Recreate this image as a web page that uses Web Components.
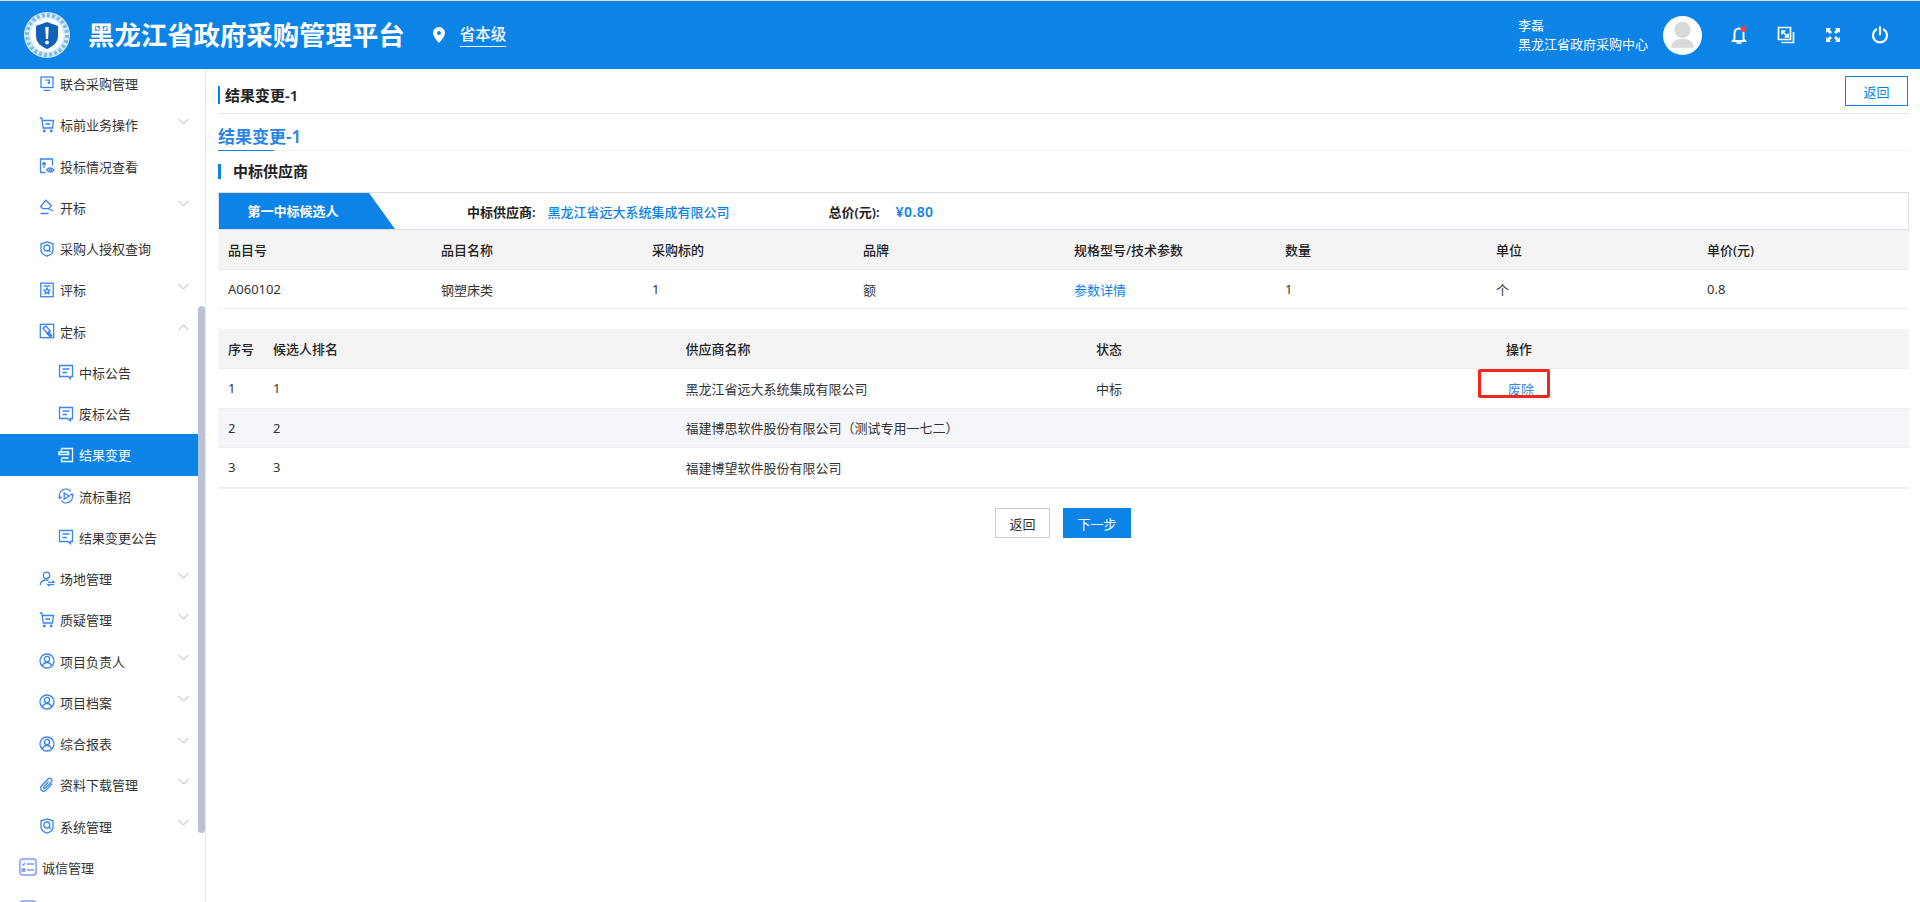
<!DOCTYPE html>
<html lang="zh-CN">
<head>
<meta charset="utf-8">
<title>结果变更</title>
<style>
  html, body { margin: 0; height: 902px; overflow: hidden; background: #fff; }
  body { font-family: "Noto Sans", "Noto Sans CJK SC", sans-serif; font-size: 13px; color: #333; }
</style>
</head>
<body>
<app-shell>
  <app-header slot="header" user="李磊" org="黑龙江省政府采购中心"></app-header>
  <side-nav slot="nav">
    <nav-item icon="join">联合采购管理</nav-item>
    <nav-item icon="cart" arrow="down">标前业务操作</nav-item>
    <nav-item icon="upeye">投标情况查看</nav-item>
    <nav-item icon="open" arrow="down">开标</nav-item>
    <nav-item icon="shield">采购人授权查询</nav-item>
    <nav-item icon="star" arrow="down">评标</nav-item>
    <nav-item icon="hammer" arrow="up">定标</nav-item>
    <nav-item icon="msg" level="2">中标公告</nav-item>
    <nav-item icon="msg" level="2">废标公告</nav-item>
    <nav-item icon="change" level="2" active>结果变更</nav-item>
    <nav-item icon="replay" level="2">流标重招</nav-item>
    <nav-item icon="msg" level="2">结果变更公告</nav-item>
    <nav-item icon="swap" arrow="down">场地管理</nav-item>
    <nav-item icon="cart" arrow="down">质疑管理</nav-item>
    <nav-item icon="user" arrow="down">项目负责人</nav-item>
    <nav-item icon="user" arrow="down">项目档案</nav-item>
    <nav-item icon="user" arrow="down">综合报表</nav-item>
    <nav-item icon="clip" arrow="down">资料下载管理</nav-item>
    <nav-item icon="shield" arrow="down">系统管理</nav-item>
    <nav-item icon="list" level="0">诚信管理</nav-item>
    <nav-item icon="list" level="0"></nav-item>
  </side-nav>

  <page-head>结果变更-1</page-head>
  <tab-title>结果变更-1</tab-title>
  <section-title>中标供应商</section-title>
  <winner-bar tab="第一中标候选人" supplier="黑龙江省远大系统集成有限公司" price="¥0.80"></winner-bar>

  <data-table cols="213px 211px 211px 211px 211px 211px 211px 212px">
    <table-row head><span>品目号</span><span>品目名称</span><span>采购标的</span><span>品牌</span><span>规格型号/技术参数</span><span>数量</span><span>单位</span><span>单价(元)</span></table-row>
    <table-row short><span>A060102</span><span>钢塑床类</span><span>1</span><span>额</span><span class="link">参数详情</span><span>1</span><span>个</span><span>0.8</span></table-row>
  </data-table>

  <data-table class="second" cols="45px 412.5px 410.5px 410px 413px">
    <table-row head><span>序号</span><span>候选人排名</span><span>供应商名称</span><span>状态</span><span>操作</span></table-row>
    <table-row><span>1</span><span>1</span><span>黑龙江省远大系统集成有限公司</span><span>中标</span><span><mark-link>废除</mark-link></span></table-row>
    <table-row stripe><span>2</span><span>2</span><span>福建博思软件股份有限公司（测试专用一七二）</span><span></span><span></span></table-row>
    <table-row><span>3</span><span>3</span><span>福建博望软件股份有限公司</span><span></span><span></span></table-row>
  </data-table>

  <form-actions>
    <app-button>返回</app-button>
    <app-button primary>下一步</app-button>
  </form-actions>
</app-shell>

<script>
// nav icons, all on a 16 box
const ICONS = {
  join: '<rect x="2" y="1" width="12" height="10.500"/><path d="M6.500 4.200h3.800v3.600M8.600 6.300l1.700 1.600M4.500 14.300h7"/>',
  cart: '<path d="M.8 1h2l1.400 10h9.300l1-7.500H3.300"/><path d="M6.500 7h4.500" stroke-width="1.600"/><circle cx="5.300" cy="14" r=".8"/><circle cx="12.200" cy="14" r=".8"/>',
  upeye: '<path d="M6.500 14.500H1.500V1h12v6.500"/><path d="M5 10V4.500M3 6.500l2-2 2 2"/><path d="M7.600 12c1.800-2.800 5.200-2.800 7.400 0-2.200 2.800-5.600 2.800-7.400 0z"/><circle cx="11.300" cy="12" r="1.200"/>',
  open: '<path d="m6.800 1.200 5.600 5.600-2.800 2.800-6 .1-2-2.200z"/><path d="M9.500 9.500l4.800 2.500"/><path d="M1.500 14.500h8" stroke-width="1.500"/>',
  shield: '<path d="M8 .9 14 2.800v6.400c0 2.900-3 4.800-6 6-3-1.200-6-3.100-6-6V2.800z"/><circle cx="7.800" cy="7" r="3"/><path d="m10 9.300 1.600 1.500"/>',
  star: '<rect x="1.800" y="1.200" width="12.400" height="13.500"/><path d="M4.500 4h7"/><path d="m8 6 .9 2 2.100.2-1.600 1.400.5 2.100L8 10.600l-1.900 1.100.5-2.100L5 8.200 7.100 8z"/>',
  hammer: '<rect x="1.300" y="1.300" width="13.400" height="13.400"/><path d="M4 5.300 6.800 3l4.600 5-2.900 2.500z" /><path d="m9.500 9 3.200 3.600-1.500 1.200L8 10.500z" fill="currentColor"/>',
  msg: '<path d="M1.500 1.500h13v11h-2v2.300l-2.700-2.300H1.500z"/><path d="M4.500 5h7M4.500 8.500h4.500" stroke-width="1.400"/>',
  change: '<path d="M3.500 4.500V1.500h11v13h-11v-3"/><path d="M1 5h9.500v2.500H1zM3.500 11h7" stroke-width="1.500"/>',
  replay: '<path d="M2 10A6.400 6.400 0 0 1 12.800 3.400"/><path d="M14 6A6.400 6.400 0 0 1 3.200 12.600"/><path d="m6.200 5 5 3-5 3z"/><path d="M.6 8.700 2 10.300l1.700-1.400M12.300 7.300 14 5.800l1.400 1.600"/>',
  swap: '<circle cx="7.500" cy="4.300" r="3.200"/><path d="M1.300 14.300c0-3.300 2.400-5.300 6-5.300.8 0 1.500.1 2.200.3"/><path d="M9 11.400h6.200l-1.600-1.600M15.200 13.600H9l1.600 1.600"/>',
  user: '<circle cx="8" cy="8" r="7"/><circle cx="8" cy="6" r="2.600"/><path d="M3.500 13c.6-2.200 2.400-3.500 4.500-3.500s3.900 1.300 4.500 3.500"/>',
  clip: '<path d="m13.300 6.500-6 6.400c-1.400 1.500-3.500 1.600-4.800.4s-1.100-3.300.3-4.800l6.200-6.500c1-1 2.400-1.100 3.300-.2s.8 2.300-.2 3.300l-5.700 6c-.4.500-1.100.5-1.500.1s-.4-1 .1-1.500L9.500 4.500"/>',
  list: '<rect x=".8" y=".8" width="14.400" height="14.400" rx="2.500"/><path d="M7 5.300h6.500M7 10.700h6.500M3 5.300l1 1 1.300-2"/><rect x="3" y="9.700" width="2" height="2"/>'
};

function svgIcon(name, color) {
  return `<svg viewBox="0 0 16 16" fill="none" stroke="${color}" color="${color}" stroke-width="1.300">${ICONS[name] || ''}</svg>`;
}

class AppShell extends HTMLElement {
  constructor() {
    super();
    this.attachShadow({ mode: 'open' });
    this.shadowRoot.innerHTML = `
      <style>
        :host { display: grid; grid-template-rows: 69px 833px; grid-template-columns: 206px 1fr; height: 902px; }
        ::slotted([slot=header]) { grid-column: 1 / 3; }
        main { padding: 7px 11px 0 12px; min-width: 0; }
      </style>
      <slot name="header"></slot>
      <slot name="nav"></slot>
      <main><slot></slot></main>`;
  }
}

class AppHeader extends HTMLElement {
  constructor() {
    super();
    this.attachShadow({ mode: 'open' });
    this.shadowRoot.innerHTML = `
      <style>
        :host { display: flex; align-items: center; box-sizing: border-box; height: 69px; border-top: 1px solid #d9dde2;
          background: #0c83e7; color: #fff; padding-left: 23px; padding-right: 29px; }
        .logo { width: 48px; height: 52px; flex: none; }
        h1 { margin: 0 0 0 17px; font-size: 26.400px; line-height: 34px; font-weight: 700; white-space: nowrap; }
        .pin { width: 14px; height: 16px; margin-left: 27px; flex: none; }
        .level { margin-left: 14px; font-size: 15.500px; line-height: 22px; font-weight: 500; padding-bottom: 1px; border-bottom: 1px solid #fff; }
        .who { margin-left: auto; font-size: 13px; line-height: 19px; }
        .avatar { width: 39px; height: 39px; margin-left: 15px; border-radius: 50%; background: #fff; overflow: hidden; flex: none; }
        .tools { display: flex; margin-left: 26px; gap: 25px; }
        .tools svg { width: 22px; height: 22px; display: block; }
      </style>
      <svg class="logo" viewBox="0 0 48 52">
        <circle cx="24" cy="26" r="23" fill="#d6ecfb"/>
        <circle cx="24" cy="26" r="20" fill="none" stroke="#7fbbe9" stroke-width="4" stroke-dasharray="3 2.200"/>
        <circle cx="24" cy="26" r="16.500" fill="#fff"/>
        <path d="M24 13l11 4v10c0 7-6 11-11 13-5-2-11-6-11-13V17z" fill="#0d62b8"/>
        <path d="M22.300 18h3.400l-.6 12h-2.200z" fill="#fff"/><circle cx="24" cy="33.500" r="1.900" fill="#fff"/>
      </svg>
      <h1>黑龙江省政府采购管理平台</h1>
      <svg class="pin" viewBox="0 0 14 16"><path fill-rule="evenodd" fill="#fff" d="M7 0a6 6 0 0 1 6 6c0 4-6 10-6 10S1 10 1 6a6 6 0 0 1 6-6zm0 4a2 2 0 1 0 0 4 2 2 0 0 0 0-4z"/></svg>
      <span class="level">省本级</span>
      <div class="who"><div>${this.getAttribute('user')}</div><div>${this.getAttribute('org')}</div></div>
      <svg class="avatar" viewBox="0 0 38 38"><circle cx="19" cy="13.500" r="8" fill="#d9d9d9"/><path d="M8 31c0-6 4-8.500 11-8.500S30 25 30 31z" fill="#d9d9d9"/></svg>
      <div class="tools">
        <svg viewBox="0 0 22 22"><path d="M11 4.500a4.500 4.500 0 0 0-4.500 4.500v6L5 17h12l-1.500-2V9A4.500 4.500 0 0 0 11 4.500z" fill="none" stroke="#fff" stroke-width="2"/><path d="M8.500 19h5" stroke="#fff" stroke-width="1.600"/><circle cx="15.500" cy="5" r="3" fill="#f2403a"/></svg>
        <svg viewBox="0 0 22 22" fill="none" stroke="#fff" stroke-width="1.700"><path d="M15.500 15.500V3.500h-12v12z"/><path d="M7 7l6 6M7 10.500V7h3.500M13 9.500V13H9.500"/><path d="M6.500 18.500h12V8"/></svg>
        <svg viewBox="0 0 22 22" fill="#fff"><path d="M4 4h5L7.500 5.500 10 8l-2 2-2.500-2.500L4 9zM18 4v5l-1.500-1.500L14 10l-2-2 2.500-2.500L13 4zM4 18v-5l1.500 1.500L8 12l2 2-2.500 2.500L9 18zM18 18h-5l1.500-1.500L12 14l2-2 2.500 2.500L18 13z"/></svg>
        <svg viewBox="0 0 22 22" fill="none" stroke="#fff" stroke-width="2.200" stroke-linecap="round"><path d="M14.800 5.500a7 7 0 1 1-7.600 0"/><path d="M11 3v7.500"/></svg>
      </div>`;
  }
}

class SideNav extends HTMLElement {
  constructor() {
    super();
    this.attachShadow({ mode: 'open' });
    this.shadowRoot.innerHTML = `
      <style>
        :host { display: flex; width: 206px; height: 833px; box-sizing: border-box; border-right: 1px solid #e6e8ec; overflow: hidden; }
        .list { width: 198px; margin-top: -6px; flex: none; }
        .track { width: 7px; }
        .thumb { margin-top: 237px; height: 527px; background: #b8c2d4; border-radius: 4px; }
      </style>
      <div class="list"><slot></slot></div>
      <div class="track"><div class="thumb"></div></div>`;
  }
}

class NavItem extends HTMLElement {
  constructor() {
    super();
    this.attachShadow({ mode: 'open' });
    const level = this.getAttribute('level') || '1';
    const active = this.hasAttribute('active');
    const arrow = this.getAttribute('arrow');
    const left = { 0: 19, 1: 39, 2: 58 }[level];
    const size = level === '0' ? 18 : 16;
    const color = active ? '#fff' : (level === '0' ? '#7f9cf5' : '#3a84ee');
    const chevron = arrow ? `<svg class="chev" viewBox="0 0 11 7" fill="none" stroke="#a9b2bd"><path d="${arrow === 'up' ? 'M.5 6 5.500 1l5 5' : 'M.5 1l5 5 5-5'}"/></svg>` : '';
    this.shadowRoot.innerHTML = `
      <style>
        :host { display: flex; align-items: center; height: 41.250px; padding-left: ${left}px; padding-right: 9px;
          box-sizing: border-box; font-size: 13px; color: ${active ? '#fff' : '#333'}; background: ${active ? '#0c83e7' : 'transparent'}; }
        .ico { width: ${size}px; height: ${size}px; flex: none; margin-right: ${level === '0' ? 5 : 5}px; }
        .ico svg { width: 100%; height: 100%; display: block; }
        .chev { width: 11px; height: 7px; margin-left: auto; margin-top: -7px; }
      </style>
      <span class="ico">${svgIcon(this.getAttribute('icon'), color)}</span>
      <slot></slot>${chevron}`;
  }
}

class PageHead extends HTMLElement {
  constructor() {
    super();
    this.attachShadow({ mode: 'open' });
    this.shadowRoot.innerHTML = `
      <style>
        :host { display: flex; align-items: center; justify-content: space-between; padding-bottom: 7px; box-sizing: border-box;
          height: 38px; border-bottom: 1px solid #e6e6e6; padding-right: 1px; }
        .t { border-left: 2px solid #0c83e7; padding-left: 5px; font-size: 15px; line-height: 18px; font-weight: 600; color: #222; margin-top: 7px; }
        button { width: 63px; height: 30px; padding: 0; background: #fff; border: 1px solid #0c83e7; color: #0c83e7; font: inherit; font-size: 13px; }
      </style>
      <span class="t"><slot></slot></span>
      <button>返回</button>`;
  }
}

class TabTitle extends HTMLElement {
  constructor() {
    super();
    this.attachShadow({ mode: 'open' });
    this.shadowRoot.innerHTML = `
      <style>
        :host { display: block; height: 37px; border-bottom: 1px solid #f0f1f3; box-sizing: border-box; }
        span { display: inline-block; box-sizing: border-box; width: 56px; height: 37px; padding-top: 11px; font-size: 17px; line-height: 24px; font-weight: 600;
          color: #2a85e8; border-bottom: 1px solid #0c83e7; white-space: nowrap; }
      </style>
      <span><slot></slot></span>`;
  }
}

class SectionTitle extends HTMLElement {
  constructor() {
    super();
    this.attachShadow({ mode: 'open' });
    this.shadowRoot.innerHTML = `
      <style>
        :host { display: block; margin-top: 13px; height: 15px; border-left: 3px solid #0c83e7; padding-left: 12px;
          font-size: 15px; line-height: 15px; font-weight: 600; color: #222; }
      </style>
      <slot></slot>`;
  }
}

class WinnerBar extends HTMLElement {
  constructor() {
    super();
    this.attachShadow({ mode: 'open' });
    this.shadowRoot.innerHTML = `
      <style>
        :host { display: flex; align-items: center; margin-top: 13px; height: 38px; box-sizing: border-box; border: 1px solid #d8deea; font-size: 13px; }
        .tab { width: 176px; height: 36px; flex: none; box-sizing: border-box; padding-left: 28.500px; line-height: 36px; background: #0c83e7; color: #fff; font-weight: 600;
          clip-path: polygon(0 0, 150px 0, 176px 100%, 0 100%); }
        b { font-weight: 600; color: #222; }
        .v { color: #0c83e7; font-weight: 500; }
        .a { margin-left: 72px; }
        .s { margin-left: 12px; width: 281px; }
        .p { margin-left: 16px; font-weight: 600; font-size: 14px; letter-spacing: .4px; }
      </style>
      <div class="tab">${this.getAttribute('tab')}</div>
      <b class="a">中标供应商:</b><span class="v s">${this.getAttribute('supplier')}</span>
      <b>总价(元):</b><span class="v p">${this.getAttribute('price')}</span>`;
  }
}

class DataTable extends HTMLElement {
  constructor() {
    super();
    this.attachShadow({ mode: 'open' });
    this.shadowRoot.innerHTML = `
      <style>
        :host { display: block; font-size: 13px; --cols: ${this.getAttribute('cols')}; }
        :host(.second) { margin-top: 20px; border-bottom: 1px solid #f0f1f3; }
      </style>
      <slot></slot>`;
  }
}

class TableRow extends HTMLElement {
  constructor() {
    super();
    this.attachShadow({ mode: 'open' });
    const bg = this.hasAttribute('head') ? '#f4f4f5' : this.hasAttribute('stripe') ? '#f5f6fa' : '#fff';
    const height = this.hasAttribute('head') ? 40 : this.hasAttribute('short') ? 39 : 39.5;
    this.shadowRoot.innerHTML = `
      <style>
        :host { display: grid; grid-template-columns: var(--cols); align-items: center; height: ${height}px; box-sizing: border-box;
          border-bottom: 1px solid #ebedf0; background: ${bg}; color: ${this.hasAttribute('head') ? '#222' : '#333'}; font-weight: ${this.hasAttribute('head') ? 500 : 400}; }
        ::slotted(span) { padding-left: 10px; white-space: nowrap; }
        ::slotted(.link) { color: #0c83e7; }
      </style>
      <slot></slot>`;
  }
}

// link with the red annotation box drawn over it
class MarkLink extends HTMLElement {
  constructor() {
    super();
    this.attachShadow({ mode: 'open' });
    this.shadowRoot.innerHTML = `
      <style>
        :host { position: relative; display: inline-block; color: #3a86ea; margin-left: 2px; }
        i { position: absolute; left: -30px; top: -10px; width: 72px; height: 29px; box-sizing: border-box; border: 3px solid #f5261b; border-radius: 2px; }
      </style>
      <slot></slot><i></i>`;
  }
}

class FormActions extends HTMLElement {
  constructor() {
    super();
    this.attachShadow({ mode: 'open' });
    this.shadowRoot.innerHTML = `
      <style>
        :host { display: flex; gap: 13px; margin-top: 19.500px; padding-left: 777px; }
      </style>
      <slot></slot>`;
  }
}

class AppButton extends HTMLElement {
  constructor() {
    super();
    this.attachShadow({ mode: 'open' });
    const primary = this.hasAttribute('primary');
    this.shadowRoot.innerHTML = `
      <style>
        :host { display: flex; align-items: center; justify-content: center; box-sizing: border-box; height: 30px; font-size: 13px;
          width: ${primary ? 68 : 55}px; background: ${primary ? '#0c83e7' : '#fff'}; color: ${primary ? '#fff' : '#333'};
          border: 1px solid ${primary ? '#0c83e7' : '#ccc'}; }
      </style>
      <slot></slot>`;
  }
}

customElements.define('app-shell', AppShell);
customElements.define('app-header', AppHeader);
customElements.define('side-nav', SideNav);
customElements.define('nav-item', NavItem);
customElements.define('page-head', PageHead);
customElements.define('tab-title', TabTitle);
customElements.define('section-title', SectionTitle);
customElements.define('winner-bar', WinnerBar);
customElements.define('data-table', DataTable);
customElements.define('table-row', TableRow);
customElements.define('mark-link', MarkLink);
customElements.define('form-actions', FormActions);
customElements.define('app-button', AppButton);
</script>
</body>
</html>
